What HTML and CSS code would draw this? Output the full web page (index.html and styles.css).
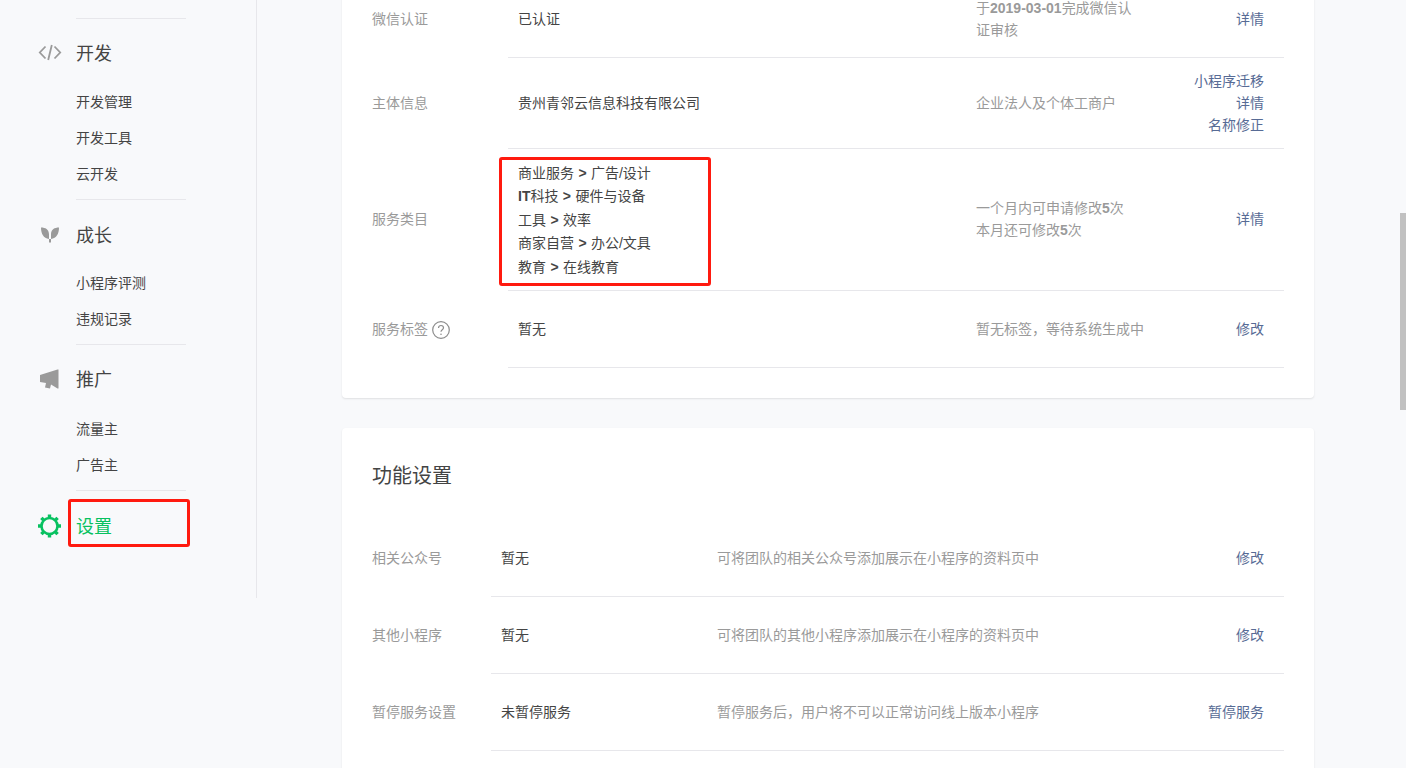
FILE: index.html
```html
<!DOCTYPE html>
<html lang="zh-CN">
<head>
  <meta charset="UTF-8">
  <title>设置</title>
  <link rel="stylesheet" href="styles.css">
</head>
<body>

  <div class="page">
    <div class="sidebar">
      <div class="nav-group">
        <div class="nav-heading">
          <svg class="nav-icon" viewBox="0 0 24 24"><path d="M7.500 5.500 1.800 11.500l5.700 6M16.500 5.500l5.700 6-5.700 6M13.800 4l-3.600 15" fill="none" stroke="#9a9a9a" stroke-width="1.800"/></svg>
          <span>开发</span>
        </div>
        <a class="nav-item">开发管理</a>
        <a class="nav-item">开发工具</a>
        <a class="nav-item">云开发</a>
      </div>

      <div class="nav-group nav-grow">
        <div class="nav-heading">
          <svg class="nav-icon" viewBox="0 0 24 24"><path d="M3 4.500C7.500 4.500 10.800 6.500 11 11v8.500h2V11c.2-4.500 3.500-6.500 8-6.500 0 6-2.500 11-8 11.500h-2C5.500 15.500 3 10.500 3 4.500z" fill="#9a9a9a"/></svg>
          <span>成长</span>
        </div>
        <a class="nav-item">小程序评测</a>
        <a class="nav-item">违规记录</a>
      </div>

      <div class="nav-group nav-promo">
        <div class="nav-heading">
          <svg class="nav-icon" viewBox="0 0 24 24"><path d="M20.500 2.500v19h-1l-6.500-4-1 4-5-1 1-4.500-6-1V8L19.500 2.500z" fill="#9a9a9a"/></svg>
          <span>推广</span>
        </div>
        <a class="nav-item">流量主</a>
        <a class="nav-item">广告主</a>
      </div>

      <div class="nav-group nav-settings">
        <div class="nav-heading active">
          <svg class="nav-icon" viewBox="0 0 24 24"><circle cx="11.500" cy="12" r="8" fill="none" stroke="#07c160" stroke-width="2.600"/><path d="M11.500.500v3M11.500 20.500v3M0 12h3M20 12h3M3.400 3.900l2.100 2.100M17.500 18l2.100 2.100M3.400 20.100 5.500 18M17.500 6l2.100-2.100" stroke="#07c160" stroke-width="3.400"/></svg>
          <span>设置</span>
        </div>
      </div>
    </div>

    <div class="main">
      <div class="card">
        <div class="info-row">
          <div class="info-label">微信认证</div>
          <div class="info-body">
            <div class="info-value">已认证</div>
            <div class="info-desc">于<b>2019-03-01</b>完成微信认<br>证审核</div>
            <div class="info-action"><a>详情</a></div>
          </div>
        </div>
        <div class="info-row">
          <div class="info-label">主体信息</div>
          <div class="info-body">
            <div class="info-value">贵州青邻云信息科技有限公司</div>
            <div class="info-desc">企业法人及个体工商户</div>
            <div class="info-action"><a>小程序迁移</a><a>详情</a><a>名称修正</a></div>
          </div>
        </div>
        <div class="info-row category-row">
          <div class="info-label">服务类目</div>
          <div class="info-body">
            <div class="info-value category-list">
              <div>商业服务 <b>&gt;</b> 广告/设计</div>
              <div><b>IT</b>科技 <b>&gt;</b> 硬件与设备</div>
              <div>工具 <b>&gt;</b> 效率</div>
              <div>商家自营 <b>&gt;</b> 办公/文具</div>
              <div>教育 <b>&gt;</b> 在线教育</div>
            </div>
            <div class="info-desc">一个月内可申请修改<b>5</b>次<br>本月还可修改<b>5</b>次</div>
            <div class="info-action"><a>详情</a></div>
          </div>
        </div>
        <div class="info-row">
          <div class="info-label">服务标签
            <svg class="help-icon" viewBox="0 0 18 18"><circle cx="9" cy="9" r="8.300" fill="none" stroke="#8c8c8c" stroke-width="1.200"/><path d="M6.500 7c0-1.500 1.100-2.500 2.500-2.500s2.500 1 2.500 2.300c0 1.900-2.500 2-2.500 4" fill="none" stroke="#8c8c8c" stroke-width="1.200"/><circle cx="9" cy="13.200" r=".8" fill="#8c8c8c"/></svg>
          </div>
          <div class="info-body">
            <div class="info-value">暂无</div>
            <div class="info-desc">暂无标签，等待系统生成中</div>
            <div class="info-action"><a>修改</a></div>
          </div>
        </div>
      </div>

      <div class="card card-func">
        <h3 class="card-title">功能设置</h3>
        <div class="func-row">
          <div class="func-label">相关公众号</div>
          <div class="func-body">
            <div class="func-value">暂无</div>
            <div class="func-desc">可将团队的相关公众号添加展示在小程序的资料页中</div>
            <div class="info-action"><a>修改</a></div>
          </div>
        </div>
        <div class="func-row">
          <div class="func-label">其他小程序</div>
          <div class="func-body">
            <div class="func-value">暂无</div>
            <div class="func-desc">可将团队的其他小程序添加展示在小程序的资料页中</div>
            <div class="info-action"><a>修改</a></div>
          </div>
        </div>
        <div class="func-row">
          <div class="func-label">暂停服务设置</div>
          <div class="func-body">
            <div class="func-value">未暂停服务</div>
            <div class="func-desc">暂停服务后，用户将不可以正常访问线上版本小程序</div>
            <div class="info-action"><a>暂停服务</a></div>
          </div>
        </div>
      </div>
    </div>
  </div>

  <div class="scroll-thumb"></div>

</body>
</html>
```

FILE: styles.css
```css
* {
  margin: 0;
  padding: 0;
  box-sizing: border-box;
  font-family: "Liberation Sans", "Noto Sans CJK SC", sans-serif;
}

html, body {
  height: 768px;
  overflow: hidden;
}

body {
  background-color: #f8f9fb;
  color: #444;
  font-size: 14px;
  line-height: 22px;
}

/* page is scrolled down a little in the shot */
.page {
  display: flex;
  margin-top: -19px;
}

.sidebar {
  width: 257px;
  height: 617px;
  padding-top: 37px;
  border-right: 1px solid #e7e7eb;
  flex-shrink: 0;
}

.nav-group {
  margin-left: 38px;
  padding-bottom: 7px;
  position: relative;
}

.nav-group::before {
  content: "";
  display: block;
  width: 110px;
  height: 1px;
  margin-left: 38px;
  background-color: #e7e7eb;
}

.nav-heading {
  display: flex;
  align-items: center;
  height: 36px;
  margin: 17px 0 12px;
  font-size: 18px;
}

.nav-grow .nav-heading {
  margin: 18px 0 11px;
}

.nav-promo .nav-heading {
  margin-bottom: 13px;
}

.nav-settings .nav-heading {
  margin-top: 18px;
}

.nav-heading.active {
  color: #07c160;
  position: relative;
}

.nav-heading.active::after {
  content: "";
  position: absolute;
  left: 30px;
  top: -10px;
  width: 116px;
  height: 42px;
  border: 3px solid #ff1a0f;
  border-radius: 3px;
}

.nav-icon {
  width: 24px;
  height: 24px;
  margin-right: 14px;
  margin-bottom: 3px;
  flex-shrink: 0;
}

.nav-item {
  display: block;
  height: 36px;
  line-height: 36px;
  margin-left: 38px;
}

.main {
  width: 972px;
  margin-left: 85px;
  flex-shrink: 0;
}

.card {
  background-color: white;
  padding: 0 30px 30px;
  border-radius: 4px;
  box-shadow: 0 1px 2px rgba(0,0,0,0.1);
}

.card-func {
  margin-top: 30px;
  padding-top: 31px;
}

.card-title {
  font-size: 20px;
  font-weight: 400;
  line-height: 34px;
  margin-bottom: 27px;
}

.info-row, .func-row {
  display: flex;
  align-items: stretch;
}

.info-label, .func-label {
  display: flex;
  align-items: center;
  padding-bottom: 2px;
  color: #9a9a9a;
  flex-shrink: 0;
}

.info-label {
  width: 136px;
}

.func-label {
  width: 119px;
}

.help-icon {
  width: 18px;
  height: 18px;
  margin-left: 4px;
  margin-top: 2px;
}

.info-body, .func-body {
  display: flex;
  align-items: center;
  flex: 1;
  min-height: 77px;
  padding: 12px 0;
  border-bottom: 1px solid #e7e7eb;
}

.category-row .info-body {
  padding: 11px 0 13px;
}

.info-value {
  width: 468px;
  padding-left: 10px;
  flex-shrink: 0;
}

.category-list {
  position: relative;
  top: 2px;
  line-height: 23.4px;
  word-spacing: 0.5px;
}

.category-list::after {
  content: "";
  position: absolute;
  left: -9px;
  top: -5px;
  right: 265px;
  bottom: -7px;
  border: 3px solid #ff1a0f;
  border-radius: 3px;
}

.info-desc {
  width: 170px;
  color: #9a9a9a;
}

.func-value {
  width: 226px;
  padding-left: 10px;
  flex-shrink: 0;
}

.func-desc {
  width: 420px;
  color: #9a9a9a;
}

.info-action {
  flex: 1;
  padding-right: 20px;
  text-align: right;
}

.info-action a {
  display: block;
  color: #576b95;
}

.scroll-thumb {
  position: fixed;
  right: 0;
  top: 213px;
  width: 6px;
  height: 197px;
  background-color: #c1c1c1;
}
```
